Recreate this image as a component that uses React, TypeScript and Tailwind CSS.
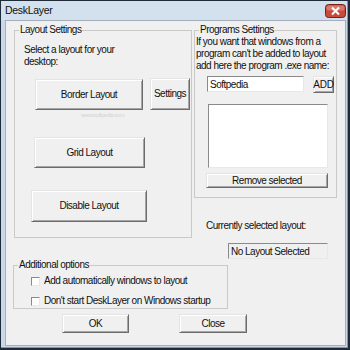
import React from 'react';

const font = "font-['Liberation_Sans',Arial,sans-serif] tracking-[-0.5px]";

const btn =
  'flex items-center justify-center bg-[#f0f0f0] border border-t-[#e4e4e4] border-l-[#e4e4e4] border-r-[#6c6c6c] border-b-[#6c6c6c] shadow-[inset_1px_1px_0_#ffffff,inset_-1px_-1px_0_#a6a6a6] text-[#111] text-[10px] leading-none whitespace-nowrap';

const sunken = 'border border-t-[#8a8a8a] border-l-[#8a8a8a] border-r-[#e8e8e8] border-b-[#e8e8e8]';

const Group = ({
  title,
  className,
  children,
}: {
  title: string;
  className: string;
  children: React.ReactNode;
}) => (
  <fieldset className={`m-0 p-0 border border-[#c9c9c9] ${className}`}>
    <legend className="ml-[4px] px-[1px] leading-[12px] text-[10px] text-[#111]">{title}</legend>
    {children}
  </fieldset>
);

const Check = ({ label }: { label: string }) => (
  <div className="flex items-center h-[12px] ml-[17px]">
    <span className={`w-[9px] h-[9px] bg-white ${sunken}`} />
    <span className="ml-[4px] text-[10px] leading-[12px] text-[#111] whitespace-nowrap">{label}</span>
  </div>
);

// red close box of the title bar
const CloseBox = () => (
  <svg width="21" height="14" viewBox="0 0 21 14" className="block">
    <rect x="0.5" y="0.5" width="20" height="13" rx="3" fill="#c94a3b" stroke="#6e241c" />
    <rect x="1.5" y="1.5" width="18" height="5" rx="2" fill="#dc7868" />
    <path d="M7 3.5 L14 10.5 M14 3.5 L7 10.5" stroke="#ffffff" strokeWidth="2" />
  </svg>
);

export default function App() {
  return (
    <div className={`w-[350px] h-[350px] bg-[#1f2b38] pl-px pt-px pr-[2px] pb-[2px] ${font}`}>
      <div className="h-full flex flex-col bg-[#cad9ea] border-r border-b border-[#2bb4e6]">
        {/* title bar */}
        <div className="h-[19px] flex items-center justify-between pl-[4px] pr-[1px] bg-[#d3e0ee]">
          <span className="text-[10.5px] leading-none text-[#111] tracking-[-0.3px]">DeskLayer</span>
          <CloseBox />
        </div>

        {/* body */}
        <div className="flex-1 ml-[4px] mr-px mb-px border border-[#a4afbb] bg-[#f0f0f0] flex flex-col">
          <div className="flex pt-[3px] pl-[8px]">
            <Group title="Layout Settings" className="w-[178px] h-[214px]">
              <div className="relative">
                <p className="mt-[8px] ml-[9px] text-[10px] leading-[12px] text-[#111]">
                  Select a layout for your
                  <br />
                  desktop:
                </p>
                <div className="flex mt-[11px]">
                  <button className={`${btn} ml-[20px] w-[108px] h-[31px]`}>Border Layout</button>
                  <button className={`${btn} ml-[7px] w-[40px] h-[32px] -mt-px`}>Settings</button>
                </div>
                <div className="absolute left-[66px] top-[68px] text-[6px] leading-none text-[#d4d4d4] pointer-events-none">
                  www.softpedia.com
                </div>
                <button className={`${btn} mt-[27px] ml-[19px] w-[111px] h-[31px]`}>Grid Layout</button>
                <button className={`${btn} mt-[22px] ml-[16px] w-[116px] h-[32px]`}>Disable Layout</button>
              </div>
            </Group>

            <div className="ml-[2px] w-[143px] flex flex-col">
              <Group title="Programs Settings" className="w-[143px] h-[174px]">
                <p className="ml-px text-[10px] leading-[12px] text-[#111] whitespace-nowrap">
                  If you want that windows from a
                  <br />
                  program can't be added to layout
                  <br />
                  add here the program .exe name:
                </p>
                <div className="flex mt-[4px]">
                  <div className={`ml-[12px] w-[97px] h-[16px] bg-white ${sunken} flex items-center pl-[2px] text-[10px] text-[#111]`}>
                    Softpedia
                  </div>
                  <button className={`${btn} ml-[9px] w-[21px] h-[17px] text-[8.5px] tracking-[-0.2px]`}>ADD</button>
                </div>
                <div className={`mt-[11px] ml-[13px] w-[120px] h-[64px] bg-white ${sunken}`} />
                <button className={`${btn} mt-[5px] ml-[11px] w-[122px] h-[15px]`}>Remove selected</button>
              </Group>
              <p className="mt-[22px] ml-[12px] text-[10px] leading-[12px] text-[#111]">Currently selected layout:</p>
              <div className={`mt-[11px] ml-[34px] w-[100px] h-[16px] ${sunken} flex items-center pl-[2px] text-[10px] text-[#111]`}>
                No Layout Selected
              </div>
            </div>
          </div>

          <Group title="Additional options" className="ml-[7px] w-[215px] h-[50px]">
            <div className="mt-[4px] flex flex-col gap-[8px]">
              <Check label="Add automatically windows to layout" />
              <Check label="Don't start DeskLayer on Windows startup" />
            </div>
          </Group>

          <div className="flex mt-[5px] ml-[56px] gap-[50px]">
            <button className={`${btn} w-[67px] h-[19px]`}>OK</button>
            <button className={`${btn} w-[68px] h-[19px]`}>Close</button>
          </div>
        </div>
      </div>
    </div>
  );
}
